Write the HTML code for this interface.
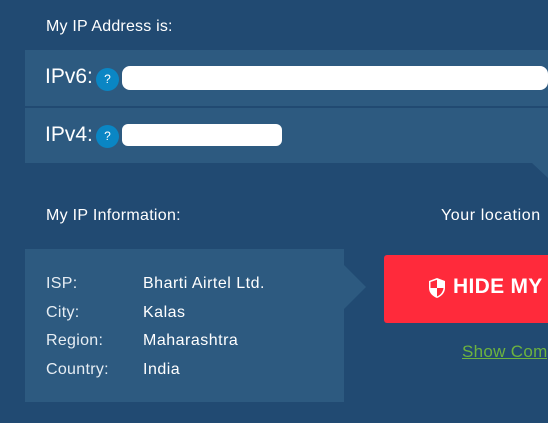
<!DOCTYPE html>
<html><head><style>
body{margin:0;width:548px;height:423px;background:#214a72;font-family:"Liberation Sans",sans-serif;color:#fff;position:relative;overflow:hidden}
.a{position:absolute;white-space:nowrap}
.p{background:#2d5a80}
</style></head><body>
<div class="a" style="left:46px;top:18px;font-size:16px;letter-spacing:0.2px">My IP Address is:</div>
<div class="a p" style="left:25px;top:50px;width:523px;height:56px"></div>
<svg class="a" style="left:25px;top:108px" width="523" height="70"><polygon points="0,0 523,0 523,70 507,55 0,55" fill="#2d5a80"/></svg>
<div class="a" style="left:45px;top:65px;font-size:21px">IPv6:</div>
<div class="a" style="left:45px;top:123px;font-size:21px">IPv4:</div>
<div class="a" style="left:96px;top:68px;width:23px;height:23px;border-radius:50%;background:#0a86c4;font-size:12px;text-align:center;line-height:23px">?</div>
<div class="a" style="left:96px;top:125px;width:23px;height:23px;border-radius:50%;background:#0a86c4;font-size:12px;text-align:center;line-height:23px">?</div>
<div class="a" style="left:122px;top:66px;width:426px;height:24px;background:#fff;border-radius:8px"></div>
<div class="a" style="left:122px;top:124px;width:160px;height:22px;background:#fff;border-radius:6px"></div>
<div class="a" style="left:46px;top:207px;font-size:16px;letter-spacing:0.3px">My IP Information:</div>
<div class="a" style="left:441px;top:207px;font-size:16px;letter-spacing:0.6px">Your location</div>
<svg class="a" style="left:25px;top:249px" width="345" height="154"><polygon points="0,0 319,0 319,16 341,38 319,60 319,153 0,153" fill="#2d5a80"/></svg>
<div class="a" style="left:46px;top:270px;font-size:16px;line-height:28.5px;color:#e6edf3;letter-spacing:0.3px">ISP:<br>City:<br>Region:<br>Country:</div>
<div class="a" style="left:143px;top:270px;font-size:16px;line-height:28.5px;letter-spacing:0.5px">Bharti Airtel Ltd.<br>Kalas<br>Maharashtra<br>India</div>
<div class="a" style="left:384px;top:255px;width:170px;height:68px;background:#ff2a3b;border-radius:3px"></div>
<svg class="a" style="left:428px;top:277px" width="18" height="22" viewBox="0 0 18 22"><path d="M9 1 L17 4 V11 C17 16 13 19.5 9 21 C5 19.5 1 16 1 11 V4 Z" fill="#fff"/><path d="M9 11 H15.5 C15 15 12.5 18 9 19.5 Z M9 11 H2.5 V5 L9 2.7Z" fill="#ff2a3b"/></svg>
<div class="a" style="left:453px;top:275px;font-size:21px;font-weight:bold;letter-spacing:0.3px">HIDE MY IP</div>
<div class="a" style="left:462px;top:342px;font-size:17px;color:#6db33f;text-decoration:underline;letter-spacing:0.3px">Show Comp</div>
</body></html>
